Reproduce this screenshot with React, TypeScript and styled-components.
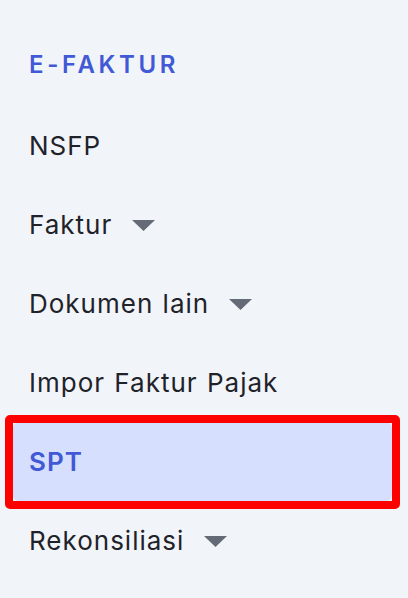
import styled, { createGlobalStyle } from 'styled-components'

const GlobalStyle = createGlobalStyle`
  html, body {
    margin: 0;
    padding: 0;
    background: #f1f4f9;
  }
  body {
    font-family: Inter, "Noto Sans", sans-serif;
    -webkit-font-smoothing: antialiased;
  }
`

interface NavItem {
  label: string
  dropdown?: boolean
  active?: boolean
}

const items: NavItem[] = [
  { label: 'NSFP' },
  { label: 'Faktur', dropdown: true },
  { label: 'Dokumen lain', dropdown: true },
  { label: 'Impor Faktur Pajak' },
  { label: 'SPT', active: true },
  { label: 'Rekonsiliasi', dropdown: true }
]

const Sidebar = styled.nav`
  width: 408px;
  height: 598px;
  box-sizing: border-box;
  padding: 0 16px 0 13px;
  background: #f1f4f9;
  overflow: hidden;
`

const SectionTitle = styled.h2`
  margin: 0;
  padding: 49px 16px 0;
  height: 106px;
  box-sizing: border-box;
  font-size: 24px;
  line-height: 32px;
  font-weight: 600;
  letter-spacing: 3.6px;
  color: #4159d6;
`

const List = styled.ul`
  list-style: none;
  margin: 0;
  padding: 0;
`

const Row = styled.li<{ $active?: boolean }>`
  position: relative;
  display: flex;
  align-items: center;
  gap: 20px;
  height: 79px;
  padding: 0 16px;
  border-radius: 6px;
  font-size: 26px;
  letter-spacing: 1px;
  word-spacing: 1px;
  font-weight: ${p => (p.$active ? 600 : 400)};
  color: ${p => (p.$active ? '#4159d6' : '#1f2329')};
  background: ${p => (p.$active ? '#d6dffd' : 'transparent')};
`

const Highlight = styled.span`
  position: absolute;
  inset: -7px -8px -8px -8px;
  border: 8px solid #ff0000;
  border-radius: 5px;
  pointer-events: none;
`

const Caret = styled.svg`
  width: 23px;
  height: 11px;
  margin-top: 2px;
  flex: none;
`

export default function App() {
  return (
    <>
      <GlobalStyle />
      <Sidebar>
        <SectionTitle>E-FAKTUR</SectionTitle>
        <List>
          {items.map(item => (
            <Row key={item.label} $active={item.active}>
              {item.label}
              {item.dropdown && (
                <Caret viewBox="0 0 23 11">
                  <polygon points="0,0 23,0 11.5,11" fill="#646a76" />
                </Caret>
              )}
              {item.active && <Highlight />}
            </Row>
          ))}
        </List>
      </Sidebar>
    </>
  )
}
